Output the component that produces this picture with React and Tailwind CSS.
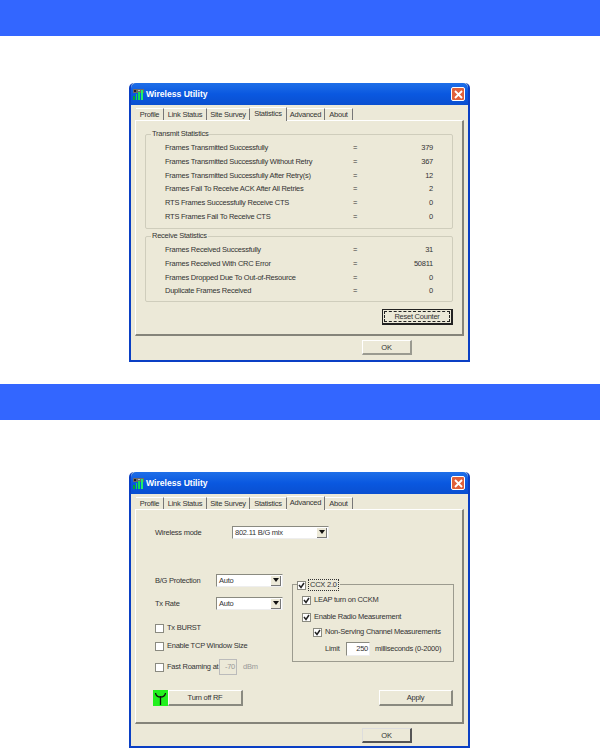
// App.jsx
const font = { fontFamily: '"Liberation Sans", Arial, sans-serif' };

function SignalIcon() {
  return (
    <svg width="11" height="11" viewBox="0 0 11 11">
      <rect x="0" y="0" width="11" height="4" fill="#6b6b6b" />
      <rect x="1" y="1" width="2" height="2" fill="#222" />
      <rect x="5" y="1" width="2" height="1" fill="#bbb" />
      <rect x="0" y="7" width="2" height="4" fill="#0a3" />
      <rect x="3" y="5" width="1" height="6" fill="#1d5" />
      <rect x="5" y="3" width="2" height="8" fill="#1d5" />
      <rect x="8" y="1" width="2" height="10" fill="#2e6" />
    </svg>
  );
}

function TitleBar() {
  return (
    <div className="h-[22px] shrink-0 flex items-center pl-[2px] pr-[3px] rounded-t-[5px] bg-gradient-to-b from-[#1f6fe8] via-[#0a58e0] to-[#0a4fd0]">
      <SignalIcon />
      <span className="ml-[2px] text-[8.6px] tracking-normal font-bold text-white">Wireless Utility</span>
      <div className="ml-auto w-[14px] h-[14px] rounded-[2px] border border-white bg-[#e0603a] flex items-center justify-center">
        <svg width="9" height="9" viewBox="0 0 9 9">
          <path d="M1 1 L8 8 M8 1 L1 8" stroke="#fff" strokeWidth="1.8" />
        </svg>
      </div>
    </div>
  );
}

const TABS = [
  ["Profile", 28],
  ["Link Status", 43],
  ["Site Survey", 43],
  ["Statistics", 37],
  ["Advanced", 38],
  ["About", 28],
];

function Tabs({ active }) {
  return (
    <div className="h-[13px] flex items-end ml-[5px]">
      {TABS.map(([name, w]) => (
        <div
          key={name}
          style={{ width: w }}
          className={
            name === active
              ? "h-[14px] -mb-px z-10 shrink-0 whitespace-nowrap text-center text-[7.5px] leading-[11px] text-[#333] bg-[#ece9d8] border-t border-t-white border-r border-r-[#777]"
              : "h-[12px] shrink-0 whitespace-nowrap text-center text-[7.5px] leading-[12px] text-[#333] border-r border-r-[#777] border-t border-t-white"
          }
        >
          {name}
        </div>
      ))}
    </div>
  );
}

function Window({ active, height, okDark, panelHeight, children }) {
  return (
    <div style={{ height }} className="ml-[129px] w-[341px] flex flex-col border-x-[2px] border-b-[2px] border-[#0a3fc4] rounded-t-[5px] bg-[#ece9d8]">
      <TitleBar />
      <div className="flex-1 flex flex-col pt-[2px]">
        <Tabs active={active} />
        <div style={{ height: panelHeight }} className="ml-[4px] mr-[4px] border-l border-t border-l-white border-t-white border-r-2 border-b-2 border-r-[#85847a] border-b-[#85847a] bg-[#ece9d8]">
          {children}
        </div>
        <div className="flex justify-end pr-[56px] mt-[4px]">
          <div className={okDark
            ? "w-[50px] h-[15px] text-center text-[7.5px] leading-[13px] text-[#333] border border-t-[#ddd] border-l-[#ddd] border-b-2 border-r-2 border-b-[#555] border-r-[#555]"
            : "w-[50px] h-[15px] text-center text-[7.5px] leading-[13px] text-[#333] border border-t-white border-l-white border-b-2 border-r-2 border-b-[#9a9a90] border-r-[#9a9a90]"}>
            OK
          </div>
        </div>
      </div>
    </div>
  );
}

function Group({ title, height, children }) {
  return (
    <div style={{ height }} className="relative mx-[9px] border border-[#cfcdbc] rounded-[2px]">
      <span className="absolute left-[5px] -top-[6px] px-px leading-[10px] bg-[#ece9d8] text-[7.5px] text-[#333]">{title}</span>
      <div className="pl-[19px] pt-[6px]">{children}</div>
    </div>
  );
}

function StatRow({ label, value }) {
  return (
    <div className="h-[13.7px] flex items-center text-[7.5px] text-[#333]">
      <div className="w-[188px] whitespace-nowrap">{label}</div>
      <div className="w-[20px]">=</div>
      <div className="w-[60px] text-right">{value}</div>
    </div>
  );
}

function Check({ checked }) {
  return (
    <div className="w-[9px] h-[9px] shrink-0 bg-white border border-[#8a8a80] flex items-center justify-center">
      {checked && (
        <svg width="7" height="7" viewBox="0 0 7 7">
          <path d="M1 3 L3 5.5 L6 1" fill="none" stroke="#222" strokeWidth="1.5" />
        </svg>
      )}
    </div>
  );
}

function Combo({ value, width }) {
  return (
    <div style={{ width }} className="h-[13px] flex items-center bg-white border border-t-[#8a8a80] border-l-[#8a8a80] border-b-[#eee] border-r-[#eee]">
      <span className="pl-[2px] text-[7.5px] text-[#333]">{value}</span>
      <div className="ml-auto w-[10px] h-[10px] mr-px bg-[#ece9d8] border-r border-b border-r-[#777] border-b-[#777] flex items-center justify-center">
        <svg width="6" height="4" viewBox="0 0 6 4"><path d="M0 0 H6 L3 4 Z" fill="#111" /></svg>
      </div>
    </div>
  );
}

function StatisticsTab() {
  return (
    <div className="pt-[13px]">
      <Group title="Transmit Statistics" height={95}>
        <StatRow label="Frames Transmitted Successfully" value="379" />
        <StatRow label="Frames Transmitted Successfully  Without Retry" value="367" />
        <StatRow label="Frames Transmitted Successfully After Retry(s)" value="12" />
        <StatRow label="Frames Fail To Receive ACK After All Retries" value="2" />
        <StatRow label="RTS Frames Successfully Receive CTS" value="0" />
        <StatRow label="RTS Frames Fail To Receive CTS" value="0" />
      </Group>
      <div className="mt-[7px]">
        <Group title="Receive Statistics" height={66}>
          <StatRow label="Frames Received Successfully" value="31" />
          <StatRow label="Frames Received With CRC Error" value="50811" />
          <StatRow label="Frames Dropped Due To Out-of-Resource" value="0" />
          <StatRow label="Duplicate Frames Received" value="0" />
        </Group>
      </div>
      <div className="flex justify-end pr-[9px] mt-[7px]">
        <div className="w-[71px] h-[16px] p-[1px] border border-[#222] border-b-2 border-r-2">
          <div className="h-full flex items-center justify-center border border-dashed border-[#222] text-[7.5px] text-[#333]">Reset Counter</div>
        </div>
      </div>
    </div>
  );
}

function AdvancedTab() {
  return (
    <div className="pt-[16px] text-[7.5px] text-[#333]">
      <div className="flex items-center h-[13px] pl-[19px]">
        <span className="w-[77px]">Wireless mode</span>
        <Combo value="802.11 B/G mix" width={97} />
      </div>
      <div className="flex mt-[35px]">
        <div className="w-[156px] pl-[19px]">
          <div className="flex items-center h-[13px]">
            <span className="w-[61px]">B/G Protection</span>
            <Combo value="Auto" width={67} />
          </div>
          <div className="flex items-center h-[13px] mt-[10px]">
            <span className="w-[61px]">Tx Rate</span>
            <Combo value="Auto" width={67} />
          </div>
          <div className="flex items-center h-[10px] mt-[13px]">
            <Check />
            <span className="ml-[3px]">Tx BURST</span>
          </div>
          <div className="flex items-center h-[10px] mt-[8px]">
            <Check />
            <span className="ml-[3px]">Enable TCP Window Size</span>
          </div>
          <div className="flex items-center h-[16px] mt-[8px]">
            <Check />
            <span className="ml-[3px] w-[52px] whitespace-nowrap">Fast Roaming at</span>
            <div className="w-[18px] h-[16px] border border-[#bbb] text-right pr-px leading-[13px] text-[#999]">-70</div>
            <span className="ml-[6px] text-[#999]">dBm</span>
          </div>
        </div>
        <div className="relative w-[162px] h-[78px] mt-[10px] border border-[#9c9b8f]">
          <div className="absolute -top-[6px] left-[4px] flex items-center bg-[#ece9d8] pr-px">
            <Check checked />
            <span className="ml-[2px] px-px border border-dotted border-[#333] leading-[10px]">CCX 2.0</span>
          </div>
          <div className="pl-[9px] pt-[10px]">
            <div className="flex items-center h-[10px]">
              <Check checked />
              <span className="ml-[3px]">LEAP turn on CCKM</span>
            </div>
            <div className="flex items-center h-[10px] mt-[7px]">
              <Check checked />
              <span className="ml-[3px]">Enable Radio Measurement</span>
            </div>
            <div className="flex items-center h-[10px] mt-[5px] ml-[11px]">
              <Check checked />
              <span className="ml-[3px] whitespace-nowrap">Non-Serving Channel Measurements</span>
            </div>
            <div className="flex items-center h-[14px] mt-[5px] ml-[23px]">
              <span className="w-[21px]">Limit</span>
              <div className="w-[24px] h-[14px] bg-white border border-t-[#8a8a80] border-l-[#8a8a80] border-b-[#eee] border-r-[#eee] text-right pr-px leading-[12px]">250</div>
              <span className="ml-[5px] whitespace-nowrap">milliseconds (0-2000)</span>
            </div>
          </div>
        </div>
      </div>
      <div className="flex items-center mt-[15px] pl-[17px] pr-[9px]">
        <div className="w-[15px] h-[16px] bg-[#22f01e] flex items-center justify-center">
          <svg width="11" height="13" viewBox="0 0 11 13">
            <path d="M5.5 13 V4 M0.5 1 C1 4 3 5 5.5 5 C8 5 10 4 10.5 1" fill="none" stroke="#111" strokeWidth="1.3" />
          </svg>
        </div>
        <div className="w-[75px] h-[16px] text-center leading-[14px] border border-t-white border-l-white border-b-2 border-r-2 border-b-[#8a8a80] border-r-[#8a8a80]">Turn off RF</div>
        <div className="ml-auto w-[74px] h-[16px] text-center leading-[14px] border border-t-white border-l-white border-b-2 border-r-2 border-b-[#8a8a80] border-r-[#8a8a80]">Apply</div>
      </div>
    </div>
  );
}

export default function App() {
  return (
    <div style={font} className="w-[600px] h-[749px] bg-white overflow-hidden tracking-[-0.24px]">
      <div className="h-9 bg-[#3366ff]" />
      <div className="mt-[47px]">
        <Window active="Statistics" height={279} panelHeight={216}>
          <StatisticsTab />
        </Window>
      </div>
      <div className="h-9 mt-[22px] bg-[#3366ff]" />
      <div className="mt-[52px]">
        <Window active="Advanced" height={276} panelHeight={215} okDark>
          <AdvancedTab />
        </Window>
      </div>
    </div>
  );
}
